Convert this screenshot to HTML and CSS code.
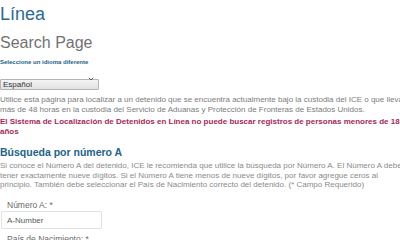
FILE: index.html
```html
<!DOCTYPE html>
<html lang="es">
<head>
<meta charset="utf-8">
<title>Localización de Detenidos en Línea</title>
<link rel="stylesheet" href="styles.css">
</head>
<body>
<div class="page">
  <h1 class="title">Línea</h1>
  <h2 class="subtitle">Search Page</h2>
  <label class="lang-label" for="lang">Seleccione un idioma diferente</label>
  <div class="lang-select">
    <select id="lang">
      <option>Español</option>
      <option>English</option>
    </select>
    <svg class="chev" width="6" height="4" viewBox="0 0 6 4"><path d="M0.8 0.8 L3 3 L5.2 0.8" fill="none" stroke="#555" stroke-width="1"/></svg>
  </div>
  <p class="intro">Utilice esta página para localizar a un detenido que se encuentra actualmente bajo la custodia del ICE o que lleva<br>más de 48 horas en la custodia del Servicio de Aduanas y Protección de Fronteras de Estados Unidos.</p>
  <p class="warning">El Sistema de Localización de Detenidos en Línea no puede buscar registros de personas menores de 18<br>años</p>
  <h3 class="section-title">Búsqueda por número A</h3>
  <p class="help">Si conoce el Número A del detenido, ICE le recomienda que utilice la búsqueda por Número A. El Número A debe<br>tener exactamente nueve dígitos. Si el Número A tiene menos de nueve dígitos, por favor agregue ceros al<br>principio. También debe seleccionar el País de Nacimiento correcto del detenido. (* Campo Requerido)</p>
  <div class="field">
    <label class="field-label" for="anum">Número A: *</label>
    <input class="field-input" id="anum" type="text" placeholder="A-Number">
  </div>
  <div class="field field-next">
    <label class="field-label">País de Nacimiento: *</label>
  </div>
</div>
</body>
</html>
```

FILE: styles.css
```css
html, body {
  margin: 0;
  padding: 0;
  background: #ffffff;
  overflow: hidden;
}
body {
  font-family: "Liberation Sans", Arial, sans-serif;
  width: 400px;
  height: 240px;
}
.page {
  display: flex;
  flex-direction: column;
  align-items: flex-start;
  width: 460px;
}
.title {
  margin: 4px 0 0 0;
  font-size: 18px;
  line-height: 20px;
  font-weight: normal;
  color: #2b6b93;
}
.subtitle {
  margin: 9px 0 0 0;
  font-size: 16px;
  line-height: 20px;
  font-weight: normal;
  color: #727272;
}
.lang-label {
  display: block;
  margin: 5px 0 0 0;
  font-size: 6px;
  line-height: 8px;
  font-weight: bold;
  color: #24618b;
}
.lang-select {
  position: relative;
  margin-top: 7px;
  width: 99px;
  height: 11px;
}
.lang-select select {
  appearance: none;
  -webkit-appearance: none;
  box-sizing: border-box;
  width: 99px;
  height: 11px;
  margin: 0;
  padding: 0 0 0 2px;
  border: 1px solid #b4b4b4;
  border-radius: 1px;
  background: linear-gradient(#f4f4f4, #e2e2e2);
  font-family: "Liberation Sans", Arial, sans-serif;
  font-size: 8px;
  line-height: 9px;
  color: #333;
}
.chev {
  position: absolute;
  right: 5px;
  top: 4px;
}
.intro {
  margin: 11px 0 0 0;
  font-size: 8px;
  line-height: 9.5px;
  color: #7c7c7c;
  white-space: nowrap;
}
.warning {
  margin: 3px 0 0 0;
  font-size: 8px;
  line-height: 10px;
  font-weight: bold;
  color: #a6285a;
  white-space: nowrap;
}
.section-title {
  margin: 9px 0 0 0;
  font-size: 10.5px;
  line-height: 13px;
  font-weight: bold;
  color: #23628b;
}
.help {
  margin: 2px 0 0 0;
  font-size: 8px;
  line-height: 9.5px;
  color: #8a8a8a;
  white-space: nowrap;
}
.field {
  display: flex;
  flex-direction: column;
  align-items: flex-start;
  margin-top: 11.5px;
}
.field-next {
  margin-top: 6px;
}
.field-label {
  padding-left: 7px;
  font-size: 8.5px;
  line-height: 9px;
  color: #6a6a6a;
}
.field-input {
  box-sizing: border-box;
  margin: 1px 0 0 1px;
  width: 101px;
  height: 18px;
  padding: 0 0 0 5px;
  border: 1px solid #e1e1e1;
  border-radius: 2px;
  background: #fff;
  font-family: "Liberation Sans", Arial, sans-serif;
  font-size: 8px;
  color: #444;
  outline: none;
}
.field-input::placeholder {
  color: #5a5a5a;
}
```
